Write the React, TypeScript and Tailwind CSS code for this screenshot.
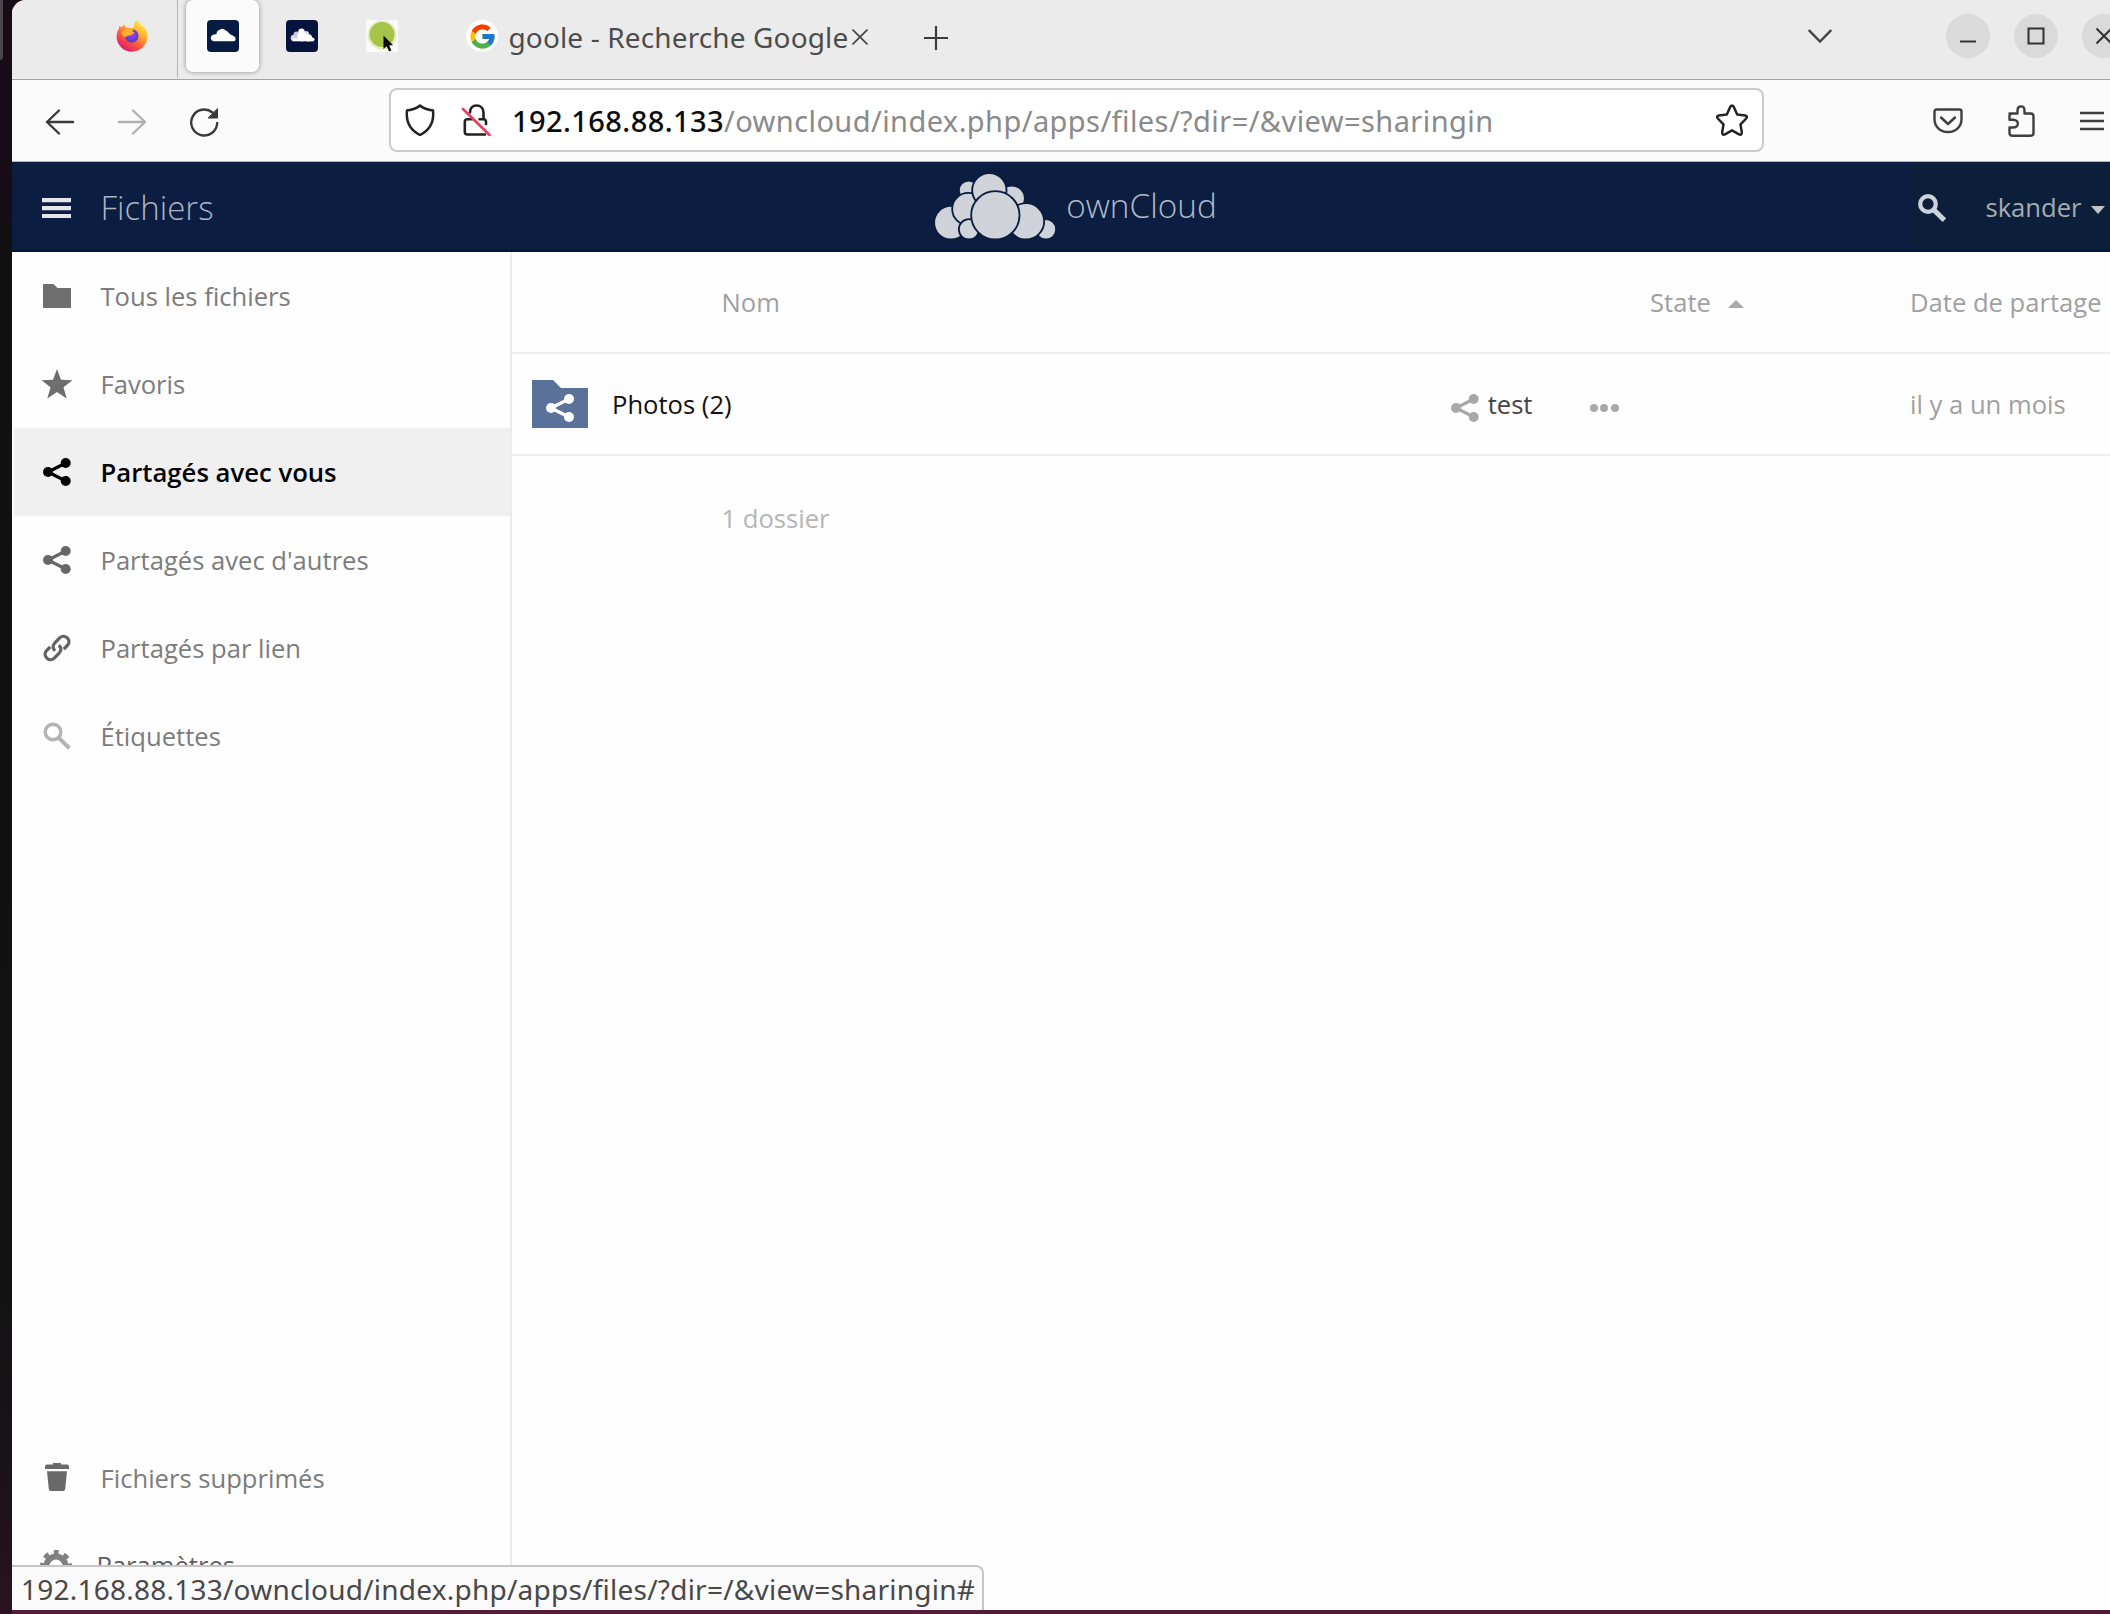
import type { ReactNode } from "react";
import { FcGoogle } from "react-icons/fc";

function FirefoxIcon() {
  return (
    <svg viewBox="0 0 32 32" className="size-8">
      <defs>
        <linearGradient id="fx-body" x1="0.85" y1="0.1" x2="0.3" y2="0.95">
          <stop offset="0" stopColor="#ffe84a" />
          <stop offset="0.35" stopColor="#ffae2c" />
          <stop offset="0.65" stopColor="#ff5b3a" />
          <stop offset="1" stopColor="#e01f6d" />
        </linearGradient>
        <radialGradient id="fx-globe" cx="0.5" cy="0.4" r="0.6">
          <stop offset="0" stopColor="#a13cf0" />
          <stop offset="1" stopColor="#4b3fc4" />
        </radialGradient>
      </defs>
      <path
        fill="url(#fx-body)"
        d="M20.5.3c2.6 1.6 4.4 3.6 5.2 5.8 1.2-.2 2.6.8 3.4 2.2 1.6 2.6 2.5 5.6 2.4 8.5C31.200 25 24.500 31.700 16 31.700S.6 25 .6 16.500c0-3.200.9-5.800 2.400-8l.3-2.500 2.500 1.200C6.600 6 7.800 5 9 4.800c-.3 1.300 0 2.200.6 2.900 2-.4 4 0 5.400.6 1-.3 2-.5 2.600-.5C17.400 5 18.500 2.200 20.500.3z"
      />
      <path fill="url(#fx-globe)" d="M16.500 9.500c3.600 0 6 2.900 6 6.500s-2.900 6.600-6.500 6.600-6.300-2.500-6.300-5.600c0-.8.3-1.800.8-2.200 1 1 3 1.200 4.600.6l2.200-1.800-3.300-.8c.3-1.800 1.200-2.800 2.500-3.300z" />
      <path fill="#ffb52e" d="M5.200 12.500c2-2.600 5.400-3.800 9-3.200l3.400 1.200-1 1.200 2 .6c-.5 1.800-2.600 2-4.400 2.400-2.200.6-2.700 1.700-4.200 2.100-2.200.5-4.600-1.600-4.800-4.300z" opacity=".9" />
    </svg>
  );
}

function CloudTile({ bubbles }: { bubbles?: boolean }) {
  return (
    <svg viewBox="0 0 32 32" className="size-8">
      <rect width="32" height="32" rx="4" fill={bubbles ? "#04143c" : "#061b42"} />
      {bubbles ? (
        <g fill="#fff">
          <circle cx="8" cy="18" r="3.300" fill="#d9dce6" />
          <circle cx="10.500" cy="14.500" r="3" fill="#c4c8d8" />
          <circle cx="15.500" cy="11.800" r="3.200" />
          <circle cx="20" cy="14" r="3" fill="#d9dce6" />
          <circle cx="16" cy="16.500" r="5" />
          <circle cx="22.500" cy="17.800" r="3.600" />
          <circle cx="26.500" cy="19.500" r="2" />
          <rect x="7" y="18.500" width="19" height="2.800" />
        </g>
      ) : (
        <path fill="#fff" d="M6.500 21.300a3.300 3.300 0 0 1-1-6.200c.8-.5 2.600-.8 4-1 .2-2.400 1.200-3.500 2.700-4.100 1-.5 1.500-1.300 3-1.300 1.700 0 2.600 1.500 4.200 2 1.600.6 2.400 2.500 4.200 3.800 2.200 1.200 5 1.800 5 4.500 0 1.300-.8 2.300-2 2.300z" />
      )}
    </svg>
  );
}

function GreenCursorIcon() {
  return (
    <svg viewBox="0 0 32 32" className="size-8">
      <rect width="32" height="32" fill="#fafafa" />
      <circle cx="16" cy="15" r="14.500" fill="#e3edbd" />
      <circle cx="16" cy="14.500" r="12.500" fill="#a6c44a" />
      <path d="M17.500 15.500v13.500l3.200-2.800 2.400 5.300 2.300-1-2.300-5.200h4z" fill="#0a0a0a" />
    </svg>
  );
}

function Stroke({ children, className, width = 2 }: { children: ReactNode; className: string; width?: number }) {
  return (
    <svg viewBox="0 0 32 32" className={className} fill="none" stroke="currentColor" strokeWidth={width} strokeLinecap="round" strokeLinejoin="round">
      {children}
    </svg>
  );
}

function ShareIcon({ className }: { className: string }) {
  return (
    <svg viewBox="0 0 28 28" className={className} fill="currentColor">
      <circle cx="5" cy="14" r="5" />
      <circle cx="22.700" cy="5" r="5" />
      <circle cx="22.700" cy="23" r="5" />
      <path d="M22.700 5 5 14l17.700 9" fill="none" stroke="currentColor" strokeWidth="3.200" />
    </svg>
  );
}

function SearchIcon({ className, width = 4.5 }: { className: string; width?: number }) {
  return (
    <svg viewBox="0 0 28 28" className={className} fill="none" stroke="currentColor">
      <circle cx="10" cy="10" r="7.800" strokeWidth={width * 0.85} />
      <path d="m15.600 15.600 10.800 10.600" strokeWidth={width} />
    </svg>
  );
}

function CloudLogo() {
  const circles: [number, number, number][] = [
    [206, 120, 27],
    [336, 144, 36],
    [153, 217, 48],
    [438, 237, 28],
    [205, 176, 46],
    [207, 237, 28],
    [268, 120, 49],
    [378, 213, 52],
    [286, 195, 70],
  ];
  return (
    <svg viewBox="102 68 366 200" className="h-[66.700px] w-[122px]">
      {circles.map(([cx, cy, r]) => (
        <circle key={`${cx}-${cy}`} cx={cx} cy={cy} r={r + 2.500} fill="#d0d3d9" stroke="#0a1d3d" strokeWidth="5.500" />
      ))}
    </svg>
  );
}

function WindowButton({ children }: { children: ReactNode }) {
  return (
    <div className="flex size-11 shrink-0 items-center justify-center rounded-full bg-[#dadada] text-[#333]">
      <svg viewBox="0 0 20 20" className="size-5" fill="none" stroke="currentColor" strokeWidth="2">
        {children}
      </svg>
    </div>
  );
}

function NavItem({ icon, label, active }: { icon: ReactNode; label: string; active?: boolean }) {
  return (
    <div
      className={
        active
          ? "flex h-[88px] shrink-0 items-center bg-[#f0f0f0] pl-[27.500px] font-semibold text-black"
          : "flex h-[88px] shrink-0 items-center pl-[27.500px] text-[#7c7c7c]"
      }
    >
      <div className="mr-[29px] flex w-[30px] justify-center">{icon}</div>
      <span className={active ? "pt-[2px] text-[25.700px]" : "pt-[2px] text-[25.600px]"}>{label}</span>
    </div>
  );
}

function TabStrip() {
  return (
    <div className="flex h-[80px] shrink-0 items-start border-b-[1.500px] border-[#a3a3a3] bg-[#ebebeb]">
      <div className="flex h-[78px] w-[166px] items-start border-r border-[#b4b4b4] pt-5 pl-[104px]">
        <FirefoxIcon />
      </div>
      <div className="ml-[8px] flex h-[72px] w-[73px] items-start justify-center rounded-[7px] bg-[#fbfbfb] pt-5 shadow-[0_0_5px_rgba(0,0,0,0.4)]">
        <CloudTile />
      </div>
      <div className="mt-5 ml-[27px]">
        <CloudTile bubbles />
      </div>
      <div className="mt-5 ml-[48px]">
        <GreenCursorIcon />
      </div>
      <div className="mt-5 ml-[68px] flex size-8 items-center justify-center rounded-full bg-white">
        <FcGoogle className="size-[29px]" />
      </div>
      <span className="mt-[17px] ml-[10.500px] w-[343.500px] text-[28px] leading-[40px] tracking-[0.130px] whitespace-nowrap text-[#4c4c4c]">
        goole - Recherche Google
      </span>
      <svg viewBox="0 0 16 16" className="mt-[29px] size-4 text-[#444]" fill="none" stroke="currentColor" strokeWidth="1.600">
        <path d="m.5.5 15 15m0-15-15 15" />
      </svg>
      <svg viewBox="0 0 24 24" className="mt-[26px] ml-[56px] size-6 text-[#3c3c3c]" fill="none" stroke="currentColor" strokeWidth="2.200">
        <path d="M12 0v24M0 12h24" />
      </svg>
      <svg viewBox="0 0 24 16" className="mt-[28px] ml-auto h-4 w-6 text-[#444]" fill="none" stroke="currentColor" strokeWidth="2.400">
        <path d="m.8 2 11.200 11.500L23.200 2" />
      </svg>
      <div className="mt-[14px] mr-[-16px] ml-[114px] flex gap-6">
        <WindowButton>
          <path d="M2 15.500h16" />
        </WindowButton>
        <WindowButton>
          <rect x="2.500" y="2.500" width="15" height="15" />
        </WindowButton>
        <WindowButton>
          <path d="m2.500 2.500 15 15m0-15-15 15" />
        </WindowButton>
      </div>
    </div>
  );
}

function Toolbar() {
  return (
    <div className="flex h-[82px] shrink-0 items-center border-b-[1.500px] border-[#b5b5b5] bg-[#fbfbfb]">
      <Stroke className="ml-[32px] size-8 text-[#3a3a3a]" width={2.4}>
        <path d="M29 17H3M15 5.500 3 17l12 11.500" />
      </Stroke>
      <Stroke className="ml-[40px] size-8 text-[#b0b0b0]" width={2.4}>
        <path d="M3 17h26M17 5.500 29 17 17 28.500" />
      </Stroke>
      <Stroke className="ml-[40px] size-8 text-[#3a3a3a]" width={2.4}>
        <path d="M29.200 18A13 13 0 1 1 24.500 7.500" />
        <path d="M29.500 4v9h-9z" fill="currentColor" strokeWidth="1" />
      </Stroke>
      <div className="mt-[-1px] ml-[168.500px] flex h-[64px] w-[1375.500px] items-center rounded-[8px] border-2 border-[#cacaca] bg-white">
        <Stroke className="ml-[13.500px] size-8 text-[#222]" width={2.500}>
          <path d="M16 1.500c4 3.500 8.500 4.500 13 5 1 9-1 18.500-13 24.500C4 25 2 15.500 3 6.500 7.500 6 12 5 16 1.500z" />
        </Stroke>
        <Stroke className="ml-[25px] size-8 text-[#222]" width={2.600}>
          <path d="M9 8.500C9 4 11.500 1.500 15.500 1.500s7 2.800 7 7V15M25 20v-2c0-2-1-2.800-2.500-2.800h-4M11 15.200H6.500c-1.800 0-2.700 1-2.700 2.800v10c0 1.800 1 2.500 2.700 2.500H24" />
          <path d="m2 5 26.500 26" stroke="#f0375c" />
        </Stroke>
        <div className="mt-[2px] ml-[19px] text-[29px] tracking-[0.420px] whitespace-nowrap text-[#8a8a8a]">
          <span className="font-medium text-[#0c0c0c]">192.168.88.133</span>
          <span>/owncloud/index.php/apps/files/?dir=/&amp;view=sharingin</span>
        </div>
        <Stroke className="mr-[14px] ml-auto size-8 text-[#222]" width={2.500}>
          <path d="M14.300 2.800q1.700-2.600 3.400 0l3.500 7.600 8 1.100q2.700.9 1 3l-5.700 5.900 1.300 8q0 3-2.800 2L16 26.400l-7 4q-2.800 1-2.800-2l1.300-8-5.700-5.900q-1.700-2.100 1-3l8-1.100z" />
        </Stroke>
      </div>
      <Stroke className="ml-auto size-8 text-[#3f3f3f]" width={2.400}>
        <path d="M4.500 4.500h23q2 0 2 2V14c0 7.500-5.500 13-13.500 13S2.500 21.500 2.500 14V6.500q0-2 2-2z" />
        <path d="m9 12.500 7 6.500 7-6.500" />
      </Stroke>
      <Stroke className="ml-[41px] size-8 text-[#3f3f3f]" width={2.400}>
        <path d="M4.500 8.500h8V5.500c0-5.500 7-5.500 7 0v3h6q3 0 3 3V28q0 2.800-3 2.800h-18q-3 0-3-2.800v-5.500h3.500c6.500 0 6.500-7.800 0-7.800h-3.500v-3.500q0-2.700 2.500-2.700z" />
      </Stroke>
      <svg viewBox="0 0 24 20" className="mr-[6px] ml-[43px] h-5 w-6 text-[#3f3f3f]" stroke="currentColor" strokeWidth="2.300">
        <path d="M0 2h24M0 10h24M0 18h24" />
      </svg>
    </div>
  );
}

function AppHeader() {
  return (
    <header className="grid h-[90px] shrink-0 grid-cols-[1fr_auto_1fr] items-center border-b-2 border-[#06153a] bg-[#0b1d40]">
      <div className="flex items-center pt-[4px] pl-[30px]">
        <svg viewBox="0 0 29 20" className="h-[20px] w-[29px] text-[#e3e5ea]" fill="currentColor">
          <path d="M0 0h29v4.200H0zM0 8h29v4.200H0zM0 16h29v4.200H0z" />
        </svg>
        <span className="ml-[29.500px] text-[33px] font-light text-[#aab4c6]">Fichiers</span>
      </div>
      <div className="flex items-center pl-[29px]">
        <CloudLogo />
        <span className="ml-[10px] text-[33.300px] font-light text-[#b0bac8]">ownCloud</span>
      </div>
      <div className="flex h-full items-center justify-end">
        <div className="flex h-full items-center bg-[#0b1e3a] pt-[4px] pr-[5px] pl-[7px]">
          <SearchIcon className="size-7 text-[#cdd2da]" width={5} />
          <span className="ml-[39.500px] text-[25.600px] text-[#a7abb1]">skander</span>
          <div className="mt-[3px] ml-[9.500px] border-x-[7.500px] border-t-[8px] border-x-transparent border-t-[#c4c4c4]" />
        </div>
      </div>
    </header>
  );
}

function Sidebar() {
  return (
    <nav className="flex w-[500px] shrink-0 flex-col border-r-2 border-[#ececec] pl-[2px]">
      <NavItem
        label="Tous les fichiers"
        icon={
          <svg viewBox="0 0 28 24" className="h-6 w-7" fill="#6e6e6e">
            <path d="M0 0h10.500l4 4H28v20H0z" />
          </svg>
        }
      />
      <NavItem
        label="Favoris"
        icon={
          <svg viewBox="0 0 32 30" className="h-[30px] w-8 shrink-0" fill="#6e6e6e">
            <path d="m16 0 4 10.800 11.500.4-9 7.100 3.200 11.200-9.700-6.500-9.700 6.500 3.200-11.200-9-7.100 11.500-.4z" />
          </svg>
        }
      />
      <NavItem active label="Partagés avec vous" icon={<ShareIcon className="size-7 text-black" />} />
      <NavItem label="Partagés avec d'autres" icon={<ShareIcon className="size-7 text-[#676767]" />} />
      <NavItem
        label="Partagés par lien"
        icon={
          <svg viewBox="0 0 28 28" className="size-7" fill="none" stroke="#626262" strokeWidth="3.200">
            <path d="M7.200 12.800 3.400 16.800c-4.300 5 2.800 11.800 7.600 7.600l5.400-5.600c2.600-3 1.600-5.800-.6-7.600" />
            <path d="M20.800 15.200l3.800-4c4.300-5-2.800-11.800-7.600-7.600l-5.400 5.600c-2.600 3-1.600 5.800.6 7.600" />
          </svg>
        }
      />
      <NavItem label="Étiquettes" icon={<SearchIcon className="size-7 text-[#b4b4b4]" width={4} />} />
      <div className="flex-1" />
      <NavItem
        label="Fichiers supprimés"
        icon={
          <svg viewBox="0 0 24 28" className="mb-[2px] h-7 w-6" fill="#6a6a6a">
            <path d="M8 0h8v1.500h6q2 0 2 2V6H0V3.500q0-2 2-2h6zM2 8.200h20L20.200 26q-.2 2-2 2H5.800q-1.800 0-2-2z" />
          </svg>
        }
      />
      <div className="flex h-[88px] shrink-0 items-center pl-[26px] text-[#5f5f5f]">
        <svg viewBox="0 0 32 32" className="mr-[24.500px] size-8" fill="none" stroke="#808080">
          <circle cx="16" cy="16" r="9.500" strokeWidth="6" />
          <circle cx="16" cy="16" r="13.500" strokeWidth="5" strokeDasharray="5.300 5.300" strokeDashoffset="2.650" transform="rotate(-90 16 16)" />
        </svg>
        <span className="text-[25.600px]">Paramètres</span>
      </div>
    </nav>
  );
}

function FileTable() {
  const cols = "grid grid-cols-[1138px_260px_1fr] items-center border-b-2 border-[#eeeeee]";
  return (
    <main className="min-w-0 flex-1 text-[25.600px] whitespace-nowrap text-[#a0a0a0]">
      <div className={`${cols} h-[102px] pt-[2px]`}>
        <span className="pl-[209.500px]">Nom</span>
        <div className="flex items-center">
          State
          <div className="mt-[2px] ml-[17px] border-x-[8px] border-b-[8px] border-x-transparent border-b-[#ababab]" />
        </div>
        <span>Date de partage</span>
      </div>
      <div className={`${cols} h-[102px] pt-[2px]`}>
        <div className="flex items-center pl-[20px]">
          <svg viewBox="0 0 56 48" className="mb-[3px] h-12 w-14">
            <path d="M0 0h21l8 8h27v40H0z" fill="#5a7299" />
            <g fill="#fff">
              <circle cx="19" cy="28" r="5" />
              <circle cx="37" cy="19" r="5" />
              <circle cx="37" cy="37" r="5" />
              <path d="m37 19-18 9 18 9" fill="none" stroke="#fff" strokeWidth="3.500" />
            </g>
          </svg>
          <span className="ml-[24px] text-[#111]">Photos (2)</span>
          <ShareIcon className="mt-[5px] ml-auto size-7 text-[#a8a8a8]" />
          <span className="ml-[9px] text-[#444]">test</span>
          <div className="mt-[5px] mr-[31.500px] ml-[57px] flex gap-[2.500px]">
            <i className="size-2 rounded-full bg-[#a8a8a8]" />
            <i className="size-2 rounded-full bg-[#a8a8a8]" />
            <i className="size-2 rounded-full bg-[#a8a8a8]" />
          </div>
        </div>
        <span />
        <span>il y a un mois</span>
      </div>
      <div className="pt-[45px] pl-[209.500px] leading-[36px] text-[#b5b5b5]">1 dossier</div>
    </main>
  );
}

export default function App() {
  return (
    <div className="flex h-[1614px] w-[2110px] overflow-hidden bg-[linear-gradient(#180b18_0px,#180b18_170px,#111111_260px,#131213_1300px,#19121b_1450px,#2a121f_1614px)] font-['Open_Sans',sans-serif]">
      <div className="w-[12px] shrink-0">
        <div className="h-[60px] w-[3px] rounded-br-[3px] bg-[#4a444b]" />
      </div>
      <div className="flex min-w-0 flex-1 flex-col">
        <div className="relative flex min-h-0 flex-1 flex-col overflow-hidden rounded-tl-[14px] bg-[#fefefe]">
          <div className="flex shrink-0 flex-col font-['Noto_Sans',sans-serif]">
            <TabStrip />
            <Toolbar />
          </div>
          <AppHeader />
          <div className="flex min-h-0 flex-1">
            <Sidebar />
            <FileTable />
          </div>
          <div className="absolute bottom-0 left-0 flex h-[45px] w-[972px] items-center rounded-tr-[8px] border-t-2 border-r-2 border-[#c6c6c6] bg-[#fafafa] pl-[9px] font-['Noto_Sans',sans-serif] text-[28px] tracking-[0.230px] whitespace-nowrap text-[#484848]">
            192.168.88.133/owncloud/index.php/apps/files/?dir=/&amp;view=sharingin#
          </div>
        </div>
        <div className="h-[4px] shrink-0 bg-[#521c3a]" />
      </div>
    </div>
  );
}
